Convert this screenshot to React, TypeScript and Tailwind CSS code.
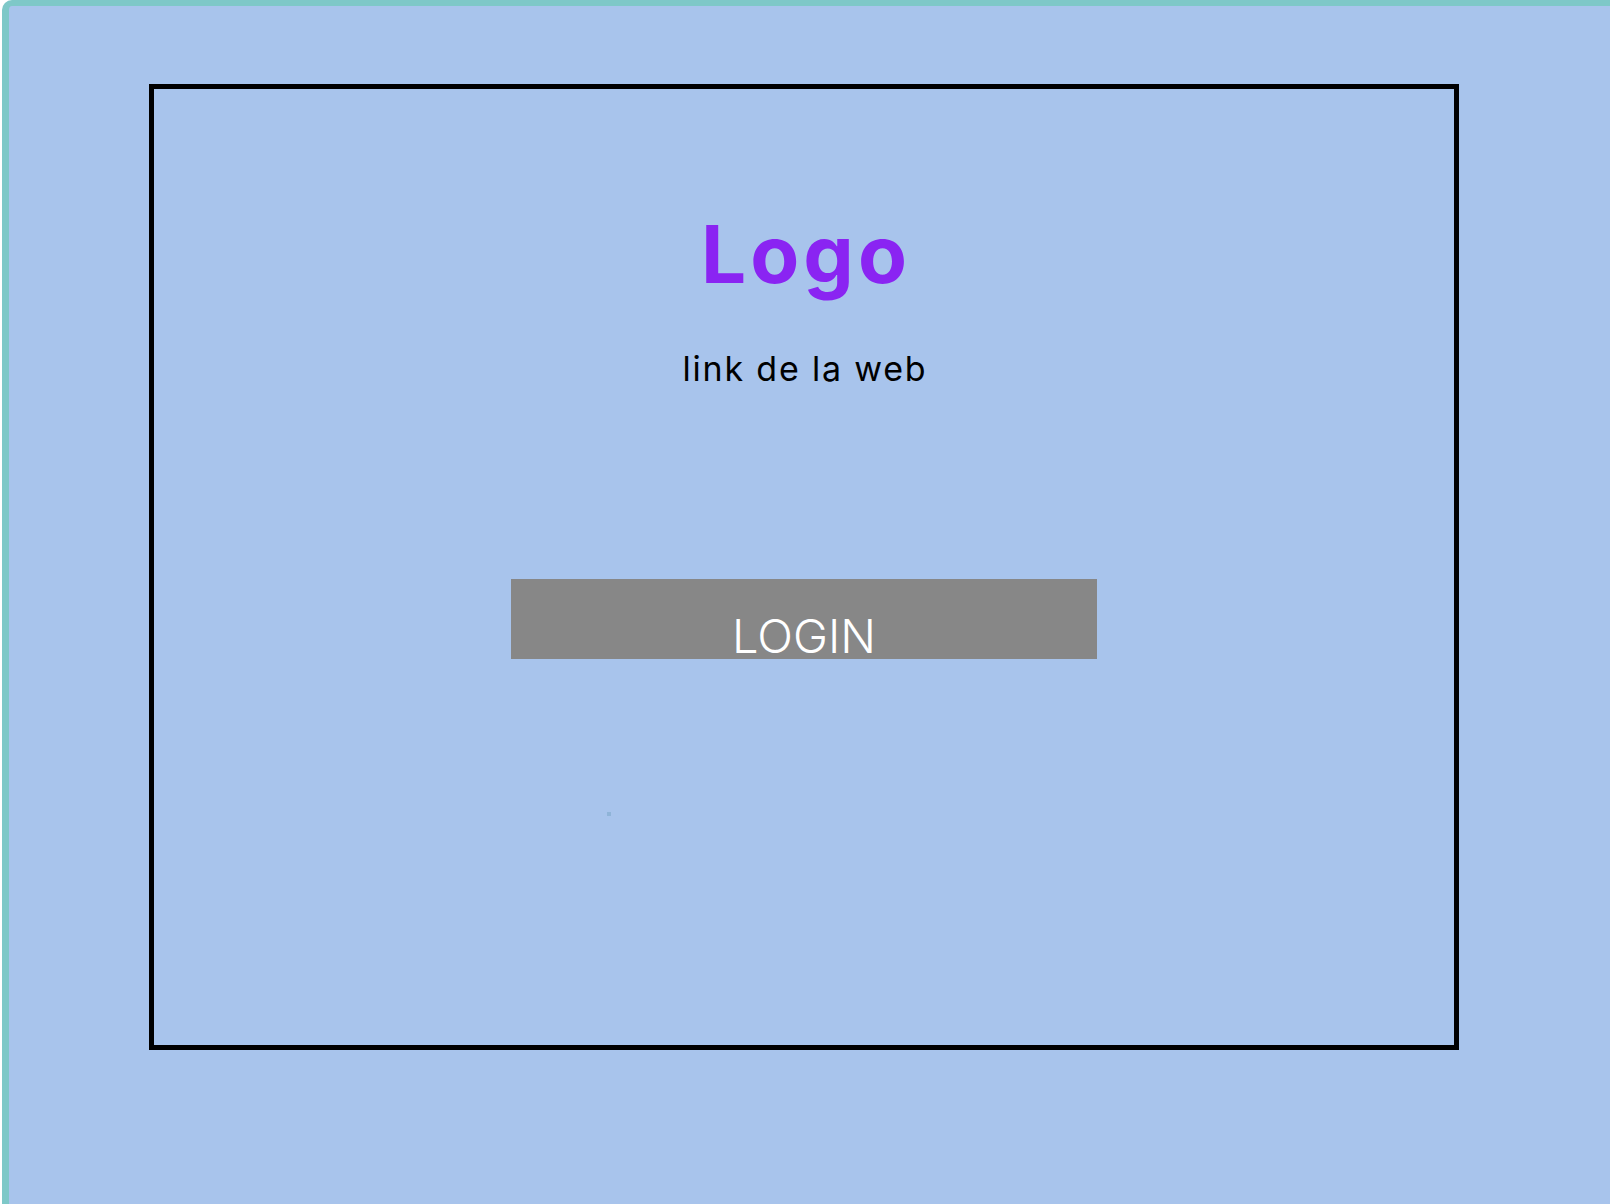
export default function App() {
  return (
    <div className="h-[1204px] w-full overflow-hidden bg-white pl-[2px]" style={{ fontFamily: "Inter, 'Open Sans', sans-serif" }}>
      <div className="h-[1220px] w-[1640px] rounded-tl-[10px] border-l-[7px] border-t-[6px] border-[#7ec8c8] bg-[#a8c4ec] pl-[140px] pt-[78px]">
        <div className="flex h-[966px] w-[1310px] flex-col items-center border-[5px] border-black">
          <h1 className="mt-[125px] pl-[4px] text-[80px] font-bold leading-none tracking-[4px] text-[#8a24f2]">Logo</h1>
          <p className="mt-[58px] pl-[2px] text-[34px] leading-none tracking-[1.8px] text-black">link de la web</p>
          <button className="mt-[193px] flex h-[80px] w-[586px] items-end justify-center bg-[#878787] text-[47px] font-light leading-none text-white">
            LOGIN
          </button>
          <div className="ml-[453px] mt-[153px] h-1 w-1 self-start bg-[#8fb4d8]" />
        </div>
      </div>
    </div>
  );
}
